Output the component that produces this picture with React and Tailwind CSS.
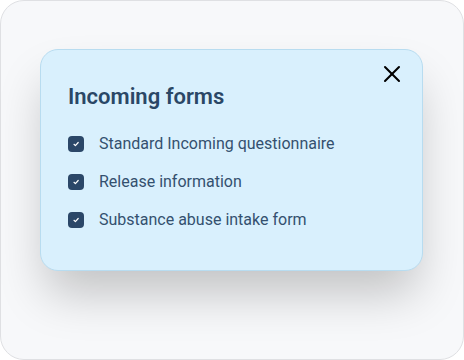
import React from 'react';
import { X } from 'lucide-react';

const forms = [
  'Standard Incoming questionnaire',
  'Release information',
  'Substance abuse intake form',
];

const CheckBox = () => (
  <span className="flex h-4 w-4 shrink-0 items-center justify-center rounded-[4px] bg-[#2b4768]">
    <svg width="8" height="8" viewBox="0 0 8 8" fill="none">
      <path d="M2 4.3 L3.4 5.6 L6.2 2.5" stroke="white" strokeWidth="1.2" strokeLinecap="round" strokeLinejoin="round" />
    </svg>
  </span>
);

const App = () => {
  return (
    <div className="h-[360px] w-[464px] bg-white" style={{ fontFamily: 'Roboto, "Liberation Sans", sans-serif' }}>
      <div className="h-full w-full rounded-[24px] border border-[#dfe0e3] bg-[#f7f8fa] pl-[39px] pt-[48px]">
        {/* Card */}
        <div className="relative h-[222px] w-[383px] rounded-[18px] border border-[#b8dcf0] bg-[#d9f0fd] pl-[27px] pt-[33px] shadow-[0_28px_48px_-6px_rgba(0,0,0,0.22)]">
          <button className="absolute right-[16px] top-[10px] text-black">
            <X size={28} strokeWidth={1.75} />
          </button>
          <h2 className="text-[22px] font-semibold leading-[28px] text-[#2a4766]">Incoming forms</h2>
          <ul className="mt-[22px] flex flex-col gap-4">
            {forms.map((f) => (
              <li key={f} className="flex items-center gap-[15px]">
                <CheckBox />
                <span className="text-[16px] leading-[22px] text-[#34506f]">{f}</span>
              </li>
            ))}
          </ul>
        </div>
      </div>
    </div>
  );
};

export default App;
